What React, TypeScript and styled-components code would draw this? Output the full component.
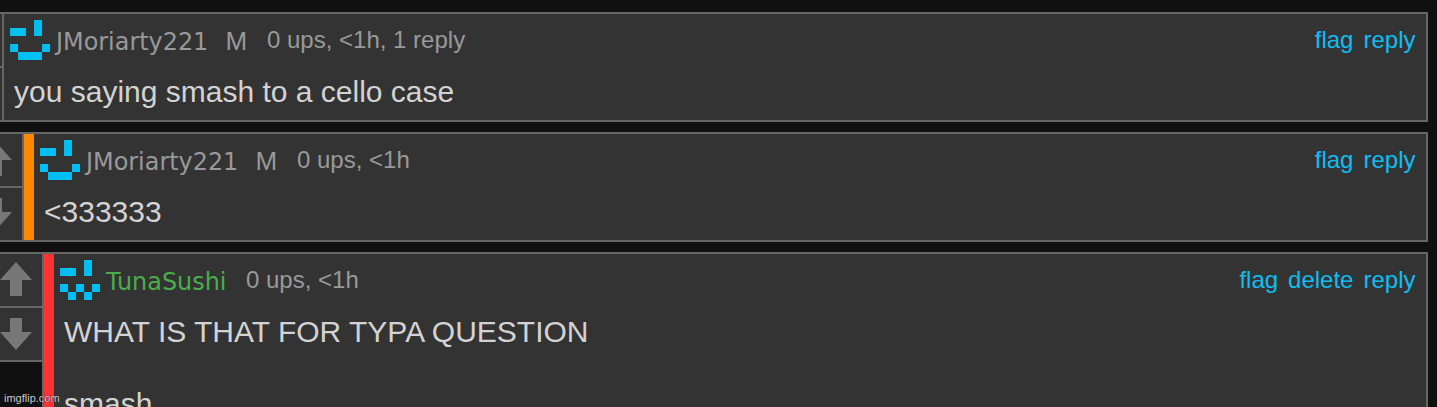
import React from "react";
import styled, { createGlobalStyle } from "styled-components";

const GlobalStyle = createGlobalStyle`
  *, *::before, *::after { box-sizing: border-box; }
  html, body { margin: 0; background: #101010; }
  body { font-family: "Liberation Sans", Arial, sans-serif; }
`;

const Page = styled.main`
  position: relative;
  height: 407px;
  overflow: hidden;
  padding: 12px 9px 0 0;
  background: #101010;
`;

const Thread = styled.div`
  display: flex;
  flex-direction: column;
  gap: 10px;
`;

const Row = styled.article<{ $depth: number }>`
  display: flex;
  align-items: flex-start;
  margin-left: ${(p) => p.$depth * 20 - 52}px;
`;

const Votes = styled.div`
  display: flex;
  flex-direction: column;
  flex: none;
  width: 54px;
  height: 110px;
  border: 2px solid #666;
  border-right: 0;
  background: #333;
`;

const VoteCell = styled.div`
  display: flex;
  justify-content: center;
  height: 54px;
  padding-top: 8px;
  & + & {
    height: 52px;
    padding-top: 10px;
  }
  &:first-child {
    border-bottom: 2px solid #666;
  }
`;

const Card = styled.div<{ $strip?: string }>`
  display: flex;
  flex: 1;
  min-width: 0;
  min-height: 110px;
  border: 2px solid #666;
  background: #333;
  &::before {
    content: "";
    flex: none;
    width: ${(p) => (p.$strip ? 10 : 0)}px;
    background: ${(p) => p.$strip || "none"};
  }
`;

const Content = styled.div`
  flex: 1;
  min-width: 0;
  padding: 6px 10.5px 0 6px;
`;

const Header = styled.header`
  display: flex;
  height: 40px;
  font-size: 24px;
  line-height: 40px;
  white-space: nowrap;
`;

const Avatar = styled.svg`
  flex: none;
  width: 40px;
  height: 40px;
`;

const UserName = styled.span<{ $color: string; $width: number }>`
  width: ${(p) => p.$width}px;
  margin-left: 6px;
  padding-top: 2px;
  color: ${(p) => p.$color};
  font-family: Verdana, "DejaVu Sans", sans-serif;
  font-size: 23.9px;
`;

const Rank = styled.span`
  width: 41.5px;
  padding-top: 1px;
  color: #999;
  font-size: 26px;
`;

const Meta = styled.span`
  color: #999;
`;

const Actions = styled.nav`
  display: flex;
  gap: 10px;
  margin-left: auto;
`;

const Action = styled.a`
  color: #0fbdf0;
`;

const Body = styled.p`
  margin: 14px 0 0 4px;
  color: #d3d3d3;
  font-size: 30px;
  line-height: 36px;
  white-space: pre-line;
`;

const Watermark = styled.div`
  position: absolute;
  left: 4px;
  bottom: 2px;
  color: #ccc;
  font-size: 11px;
  line-height: 13px;
  text-shadow: 0 0 1px #000;
`;

const WINK = ["...#.", "##.#.", ".....", "#...#", ".###."];
const ZIGZAG = ["...#.", "##.#.", ".....", "#.#.#", ".#.#."];

function PixelFace({ rows }: { rows: string[] }) {
  return (
    <Avatar viewBox="0 0 5 5" shapeRendering="crispEdges">
      {rows.flatMap((row, y) =>
        [...row].map((c, x) =>
          c === "#" ? <rect key={`${x}-${y}`} x={x} y={y} width="1" height="1" fill="#00bff3" /> : null
        )
      )}
    </Avatar>
  );
}

function VoteBox() {
  return (
    <Votes>
      <VoteCell>
        <svg width="32" height="34" viewBox="0 0 32 34">
          <path d="M16 0 32 18H22V34H10V18H0Z" fill="#777" />
        </svg>
      </VoteCell>
      <VoteCell>
        <svg width="32" height="32" viewBox="0 0 32 32">
          <path d="M16 32 32 14H22V0H10V14H0Z" fill="#777" />
        </svg>
      </VoteCell>
    </Votes>
  );
}

interface Comment {
  user: string;
  color: string;
  nameWidth: number;
  rank?: string;
  meta: string;
  face: string[];
  strip?: string;
  actions: string[];
  text: string;
}

const comments: Comment[] = [
  {
    user: "JMoriarty221", color: "#999", nameWidth: 169.5, rank: "M", meta: "0 ups, <1h, 1 reply",
    face: WINK, actions: ["flag", "reply"], text: "you saying smash to a cello case",
  },
  {
    user: "JMoriarty221", color: "#999", nameWidth: 169.5, rank: "M", meta: "0 ups, <1h",
    face: WINK, strip: "#ff8800", actions: ["flag", "reply"], text: "<333333",
  },
  {
    user: "TunaSushi", color: "#4aad4a", nameWidth: 140, meta: "0 ups, <1h",
    face: ZIGZAG, strip: "#ff3333", actions: ["flag", "delete", "reply"],
    text: "WHAT IS THAT FOR TYPA QUESTION\n\nsmash",
  },
];

export default function App() {
  return (
    <Page>
      <GlobalStyle />
      <Thread>
        {comments.map((c, depth) => (
          <Row key={depth} $depth={depth}>
            <VoteBox />
            <Card $strip={c.strip}>
              <Content>
                <Header>
                  <PixelFace rows={c.face} />
                  <UserName $color={c.color} $width={c.nameWidth}>{c.user}</UserName>
                  {c.rank && <Rank>{c.rank}</Rank>}
                  <Meta>{c.meta}</Meta>
                  <Actions>
                    {c.actions.map((a) => <Action key={a}>{a}</Action>)}
                  </Actions>
                </Header>
                <Body>{c.text}</Body>
              </Content>
            </Card>
          </Row>
        ))}
      </Thread>
      <Watermark>imgflip.com</Watermark>
    </Page>
  );
}
